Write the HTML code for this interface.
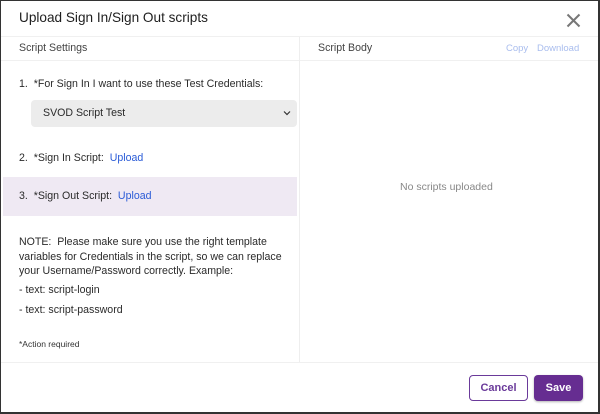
<!DOCTYPE html>
<html><head><style>
*{margin:0;padding:0;box-sizing:border-box}
body{width:600px;height:414px;background:#fff;font-family:"Liberation Sans",sans-serif;position:relative;overflow:hidden;color:#222}
.frame{position:absolute;left:0;top:0;width:600px;height:414px;border:1px solid #333;border-width:1px 2px 2px 1px}
.a{position:absolute;white-space:nowrap}
.t{font-size:10.6px;color:#2a2a2a}
.hl{position:absolute;left:1px;right:1px;height:1px;background:#f0f0f0}
.lnk{color:#2a5bd7}
</style></head><body>
<div class="a" style="left:19px;top:10px;font-size:13.6px;color:#1e1e1e">Upload Sign In/Sign Out scripts</div>
<svg class="a" style="left:566px;top:13px" width="15" height="15" viewBox="0 0 15 15"><path d="M1.5 1.5L13.5 13.5M13.5 1.5L1.5 13.5" stroke="#777" stroke-width="2"/></svg>
<div class="hl" style="top:36px"></div>
<div class="hl" style="top:60px"></div>
<div class="hl" style="top:362px"></div>
<div class="a" style="left:299px;top:37px;width:1px;height:325px;background:#eee"></div>
<div class="a t" style="left:19px;top:42px;color:#444">Script Settings</div>
<div class="a t" style="left:318px;top:42px;color:#444">Script Body</div>
<div class="a" style="left:506px;top:43px;font-size:9.5px;color:#a9bdee">Copy</div>
<div class="a" style="left:537px;top:43px;font-size:9.5px;color:#a9bdee">Download</div>
<div class="a t" style="left:19px;top:78px">1.&nbsp; *For Sign In I want to use these Test Credentials:</div>
<div class="a" style="left:31px;top:100px;width:266px;height:27px;background:#ececec;border-radius:4px"></div>
<div class="a t" style="left:43px;top:107px">SVOD Script Test</div>
<svg class="a" style="left:283px;top:110px" width="8" height="6" viewBox="0 0 8 6"><path d="M1 1.5L4 4.5L7 1.5" stroke="#333" stroke-width="1.2" fill="none"/></svg>
<div class="a t" style="left:19px;top:152px">2.&nbsp; *Sign In Script:&nbsp; <span class="lnk">Upload</span></div>
<div class="a" style="left:3px;top:177px;width:294px;height:39px;background:#efe9f3"></div>
<div class="a t" style="left:19px;top:190px">3.&nbsp; *Sign Out Script:&nbsp; <span class="lnk">Upload</span></div>
<div class="a t" style="left:19px;top:235px;line-height:14.5px">NOTE:&nbsp; Please make sure you use the right template<br>variables for Credentials in the script, so we can replace<br>your Username/Password correctly. Example:</div>
<div class="a t" style="left:19px;top:284px">- text: script-login</div>
<div class="a t" style="left:19px;top:304px">- text: script-password</div>
<div class="a" style="left:19px;top:339px;font-size:8.5px;color:#333">*Action required</div>
<div class="a" style="left:400px;top:181px;font-size:10.5px;color:#888">No scripts uploaded</div>
<div class="a" style="left:469px;top:375px;width:59px;height:26px;border:1.5px solid #6a3a9a;border-radius:4px;font-size:11px;font-weight:bold;color:#6a3a9a;text-align:center;line-height:24px">Cancel</div>
<div class="a" style="left:534px;top:375px;width:49px;height:26px;background:#662d91;border-radius:4px;font-size:11px;font-weight:bold;color:#fff;text-align:center;line-height:26px;box-shadow:0 1px 2px rgba(0,0,0,.3)">Save</div>
<div class="frame"></div>
</body></html>
